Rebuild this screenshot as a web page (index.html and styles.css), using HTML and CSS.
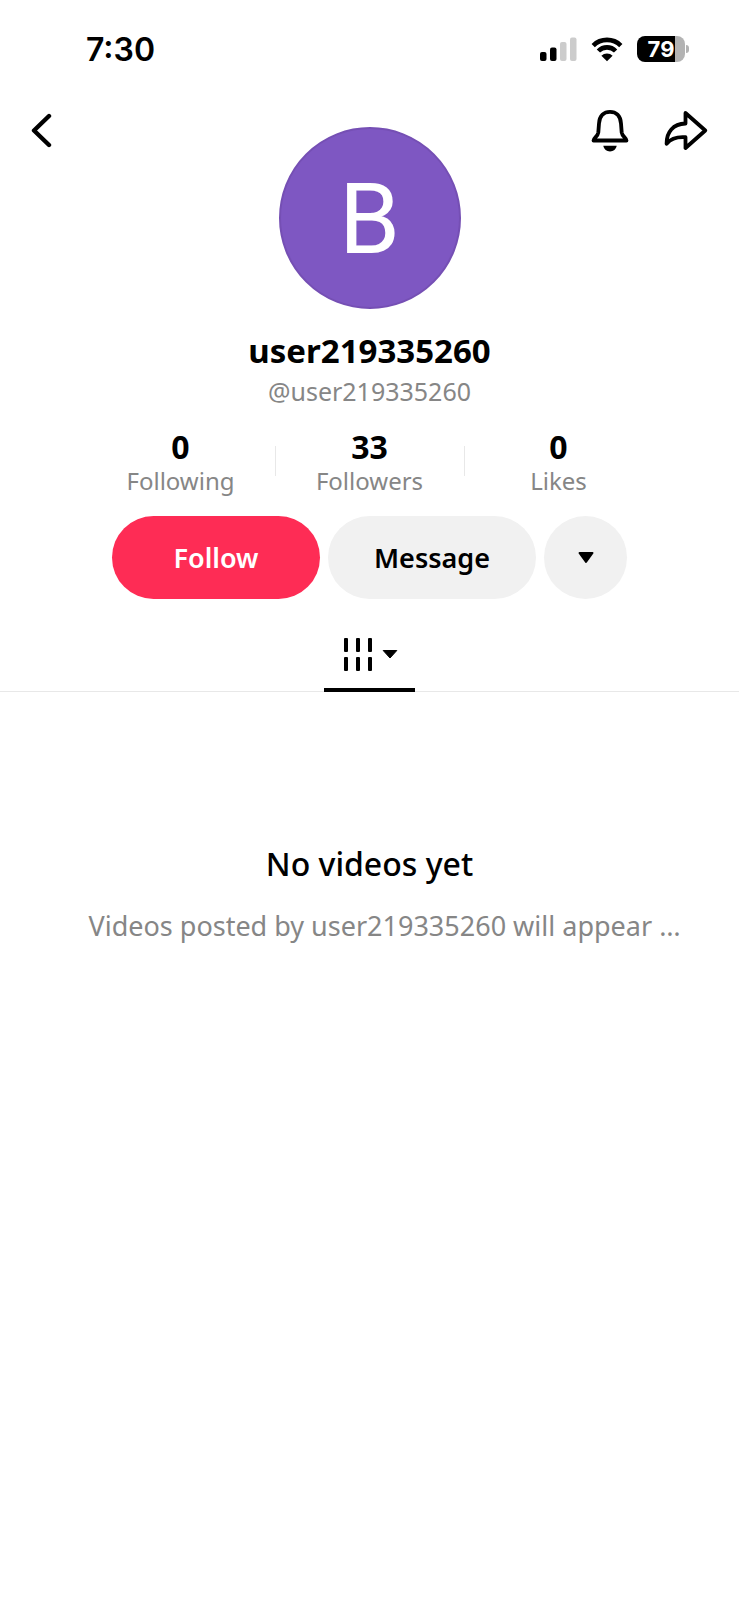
FILE: index.html
```html
<!DOCTYPE html>
<html lang="en">
<head>
    <meta charset="UTF-8">
    <meta name="viewport" content="width=device-width, initial-scale=1.0">
    <title>user219335260</title>
    <link rel="stylesheet" href="styles.css">
</head>
<body>
    <div class="status-bar">
        <span class="time">7:30</span>
        <div class="status-icons">
            <svg width="38" height="26" viewBox="0 0 38 26">
                <rect x="1" y="16" width="6.500" height="9" rx="2"/>
                <rect x="11" y="11.500" width="6.500" height="13.500" rx="2"/>
                <rect x="21" y="6" width="6.500" height="19" rx="2" fill="#ccc"/>
                <rect x="31" y="1.500" width="6.500" height="23.500" rx="2" fill="#ccc"/>
            </svg>
            <svg width="32" height="26" viewBox="0 0 32 26">
                <path d="M2.200 9.600a19.500 19.500 0 0 1 27.600 0M7.400 15a12 12 0 0 1 17.200 0" fill="none" stroke="#000" stroke-width="4.600"/>
                <path d="M10.400 19.800a7.800 7.800 0 0 1 11.200 0L16 25.200z"/>
            </svg>
            <div class="battery">
                <span class="battery-body">79</span>
                <span class="battery-tip"></span>
            </div>
        </div>
    </div>

    <header class="top">
        <button class="icon-btn" aria-label="Back">
            <svg width="24" height="40" viewBox="0 0 24 40">
                <path d="M18 8L3 22.500L18 37" fill="none" stroke="#000" stroke-width="4.400" stroke-linecap="round" stroke-linejoin="round"/>
            </svg>
        </button>
        <div class="avatar">B</div>
        <div class="top-actions">
            <button class="icon-btn" aria-label="Notifications">
                <svg width="44" height="44" viewBox="0 0 44 44">
                    <path d="M5.500 32.500H38.500C38.500 30 34.200 28.500 33.700 24.500L33 15.500C32.500 7.500 28 3.800 22 3.800S11.500 7.500 11 15.500L10.300 24.500C9.800 28.500 5.500 30 5.500 32.500z" fill="none" stroke="#000" stroke-width="3.800" stroke-linejoin="round"/>
                    <path d="M15.300 37.800h13.400c-.6 3.400-3.300 5.700-6.700 5.700s-6.100-2.300-6.700-5.700z"/>
                </svg>
            </button>
            <button class="icon-btn" aria-label="Share">
                <svg width="44" height="44" viewBox="0 0 44 44">
                    <path d="M21.500 5L41.300 22.500L21.500 40V29.200C12.500 28.500 6.500 31 2.600 35.700C2.400 24 9 16 21.500 15.500z" fill="none" stroke="#000" stroke-width="3.800" stroke-linejoin="round"/>
                </svg>
            </button>
        </div>
    </header>

    <main>
        <h1 class="name">user219335260</h1>
        <p class="handle">@user219335260</p>

        <div class="stats">
            <div class="stat"><strong>0</strong><span>Following</span></div>
            <div class="stat"><strong>33</strong><span>Followers</span></div>
            <div class="stat"><strong>0</strong><span>Likes</span></div>
        </div>

        <div class="buttons">
            <button class="btn follow">Follow</button>
            <button class="btn">Message</button>
            <button class="btn more" aria-label="Suggested accounts">
                <svg width="16" height="12" viewBox="0 0 16 12">
                    <path d="M1.500 1h13L8 10z" stroke="#000" stroke-width="2" stroke-linejoin="round"/>
                </svg>
            </button>
        </div>

        <nav class="tabs">
            <button class="tab" aria-label="Videos">
                <svg width="30" height="34" viewBox="0 0 30 34">
                    <rect x="1" y="1" width="4" height="14" rx="1"/>
                    <rect x="13" y="1" width="4" height="14" rx="1"/>
                    <rect x="25" y="1" width="4" height="14" rx="1"/>
                    <rect x="1" y="20" width="4" height="14" rx="1"/>
                    <rect x="13" y="20" width="4" height="14" rx="1"/>
                    <rect x="25" y="20" width="4" height="14" rx="1"/>
                </svg>
                <svg width="16" height="10" viewBox="0 0 16 10">
                    <path d="M1.200 1.500h13.600L8 9z" stroke="#000" stroke-linejoin="round"/>
                </svg>
            </button>
        </nav>

        <section class="empty">
            <h2>No videos yet</h2>
            <p>Videos posted by user219335260 will appear …</p>
        </section>
    </main>
</body>
</html>
```
FILE: styles.css
```css
*{
    margin: 0;
    padding: 0;
    box-sizing: border-box;
}
body{
    background-color: white;
    color: black;
    font-family: "Noto Sans", Roboto, sans-serif;
}
button{
    border: none;
    background: none;
    color: black;
    font-family: inherit;
    cursor: pointer;
}
svg{
    display: block;
}
.status-bar{
    display: flex;
    justify-content: space-between;
    align-items: center;
    height: 98px;
    padding: 0 50px 0 86px;
    font-family: Inter, sans-serif;
}
.time{
    font-size: 32px;
    font-weight: 600;
}
.status-icons{
    display: flex;
    align-items: center;
    gap: 14px;
}
.battery{
    display: flex;
    align-items: center;
    gap: 1px;
}
.battery-body{
    width: 48px;
    height: 26px;
    border-radius: 8px;
    background: linear-gradient(to right, black 79%, #b3b3b3 79%);
    color: white;
    font-size: 22px;
    font-weight: 700;
    line-height: 26px;
    text-align: center;
}
.battery-tip{
    width: 3px;
    height: 8px;
    border-radius: 0 4px 4px 0;
    background-color: #b3b3b3;
}
.top{
    display: grid;
    grid-template-columns: 1fr auto 1fr;
    align-items: start;
    padding: 10px 31px 0;
}
.icon-btn{
    justify-self: start;
}
.top-actions{
    display: flex;
    justify-content: flex-end;
    gap: 32px;
}
.avatar{
    width: 182px;
    height: 182px;
    margin-top: 19px;
    border: 2px solid #754fb4;
    border-radius: 50%;
    background-color: #7e57c2;
    color: white;
    font-family: Roboto, sans-serif;
    font-size: 98px;
    line-height: 182px;
    text-align: center;
}
.name{
    margin-top: 20px;
    font-size: 33px;
    font-weight: 700;
    line-height: 44px;
    text-align: center;
}
.handle{
    color: #868686;
    font-size: 25px;
    line-height: 36px;
    text-align: center;
}
.stats{
    display: flex;
    justify-content: center;
    margin-top: 20px;
}
.stat{
    display: flex;
    flex-direction: column;
    align-items: center;
    position: relative;
    width: 189px;
}
.stat + .stat::before{
    content: "";
    position: absolute;
    left: 0;
    top: 17px;
    width: 1px;
    height: 30px;
    background-color: #e8e8e8;
}
.stat strong{
    font-size: 32px;
    line-height: 36px;
}
.stat span{
    color: #868686;
    font-size: 24px;
    line-height: 32px;
}
.buttons{
    display: flex;
    justify-content: center;
    gap: 8px;
    margin-top: 19px;
}
.btn{
    width: 208px;
    height: 83px;
    border-radius: 42px;
    background-color: #f1f1f1;
    font-size: 27px;
    font-weight: 600;
}
.follow{
    background-color: #fe2c55;
    color: white;
}
.more{
    display: flex;
    align-items: center;
    justify-content: center;
    width: 83px;
}
.tabs{
    display: flex;
    justify-content: center;
    margin-top: 28px;
    box-shadow: inset 0 -1px #e8e8e8;
}
.tab{
    display: flex;
    align-items: center;
    justify-content: center;
    gap: 9px;
    width: 91px;
    height: 65px;
    padding: 5px 0 12px 2px;
    border-bottom: 4px solid black;
}
.empty{
    padding: 150px 0 0;
    text-align: center;
}
.empty h2{
    font-size: 32px;
    font-weight: 500;
    line-height: 44px;
}
.empty p{
    padding-left: 30px;
    margin-top: 22px;
    color: #868686;
    font-size: 27px;
    line-height: 36px;
    white-space: nowrap;
    overflow: hidden;
    text-overflow: ellipsis;
}
```
